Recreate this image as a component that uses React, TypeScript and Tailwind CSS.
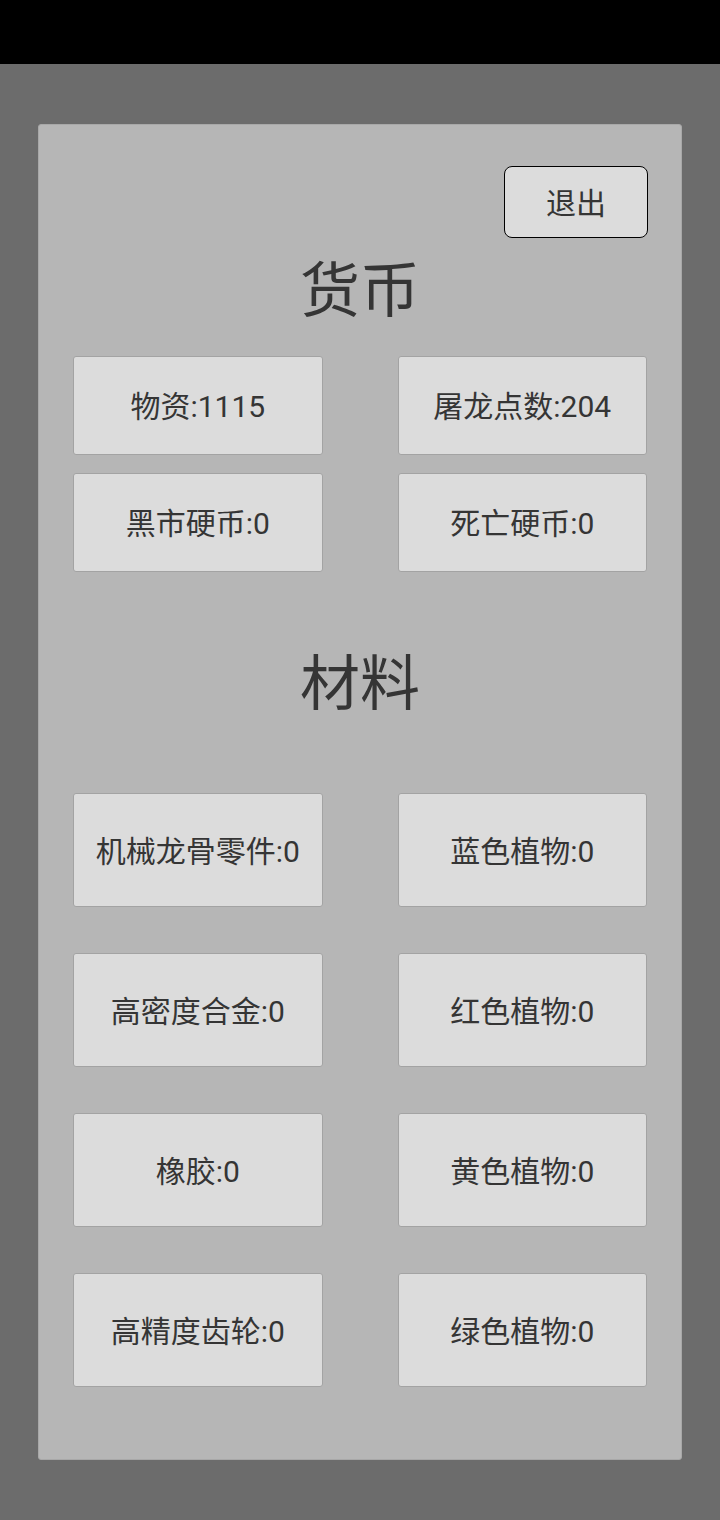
const currency = ['物资:1115', '屠龙点数:204', '黑市硬币:0', '死亡硬币:0'];

const materials = [
  '机械龙骨零件:0',
  '蓝色植物:0',
  '高密度合金:0',
  '红色植物:0',
  '橡胶:0',
  '黄色植物:0',
  '高精度齿轮:0',
  '绿色植物:0',
];

const font = { fontFamily: 'Roboto, "Noto Sans CJK SC", "Noto Sans", sans-serif' };

function Cell({ label, tall }: { label: string; tall?: boolean }) {
  return (
    <div
      className={`flex items-center justify-center pt-[2px] rounded-[3px] border border-[#a3a3a3] bg-[#dcdcdc] text-[30px] text-[#353535] ${
        tall ? 'h-[114px]' : 'h-[99px]'
      }`}
    >
      {label}
    </div>
  );
}

export default function App() {
  return (
    <div className="w-[720px] h-[1520px] bg-[#6c6c6c] flex flex-col" style={font}>
      <div className="h-16 bg-black" />

      <div className="px-[38px] pt-[60px]">
        <div className="h-[1336px] rounded-[3px] bg-[#b6b6b6] border border-[#a8a8a8] flex flex-col">
          {/* Exit */}
          <div className="flex justify-end pt-[41px] pr-[33px]">
            <button className="w-[144px] h-[72px] pt-[2px] rounded-lg border border-black bg-[#dcdcdc] text-[30px] text-[#353535]">
              退出
            </button>
          </div>

          {/* Currency */}
          <div className="h-[80px] mt-[14px] mb-[24px] flex items-center justify-center text-[60px] text-[#353535]">
            货币
          </div>
          <div className="grid grid-cols-2 gap-x-[75px] gap-y-[18px] px-[34px]">
            {currency.map((c) => (
              <Cell key={c} label={c} />
            ))}
          </div>

          {/* Materials */}
          <div className="h-[80px] mt-[73px] mb-[68px] flex items-center justify-center text-[60px] text-[#353535]">
            材料
          </div>
          <div className="grid grid-cols-2 gap-x-[75px] gap-y-[46px] px-[34px]">
            {materials.map((m) => (
              <Cell key={m} label={m} tall />
            ))}
          </div>
        </div>
      </div>
    </div>
  );
}
